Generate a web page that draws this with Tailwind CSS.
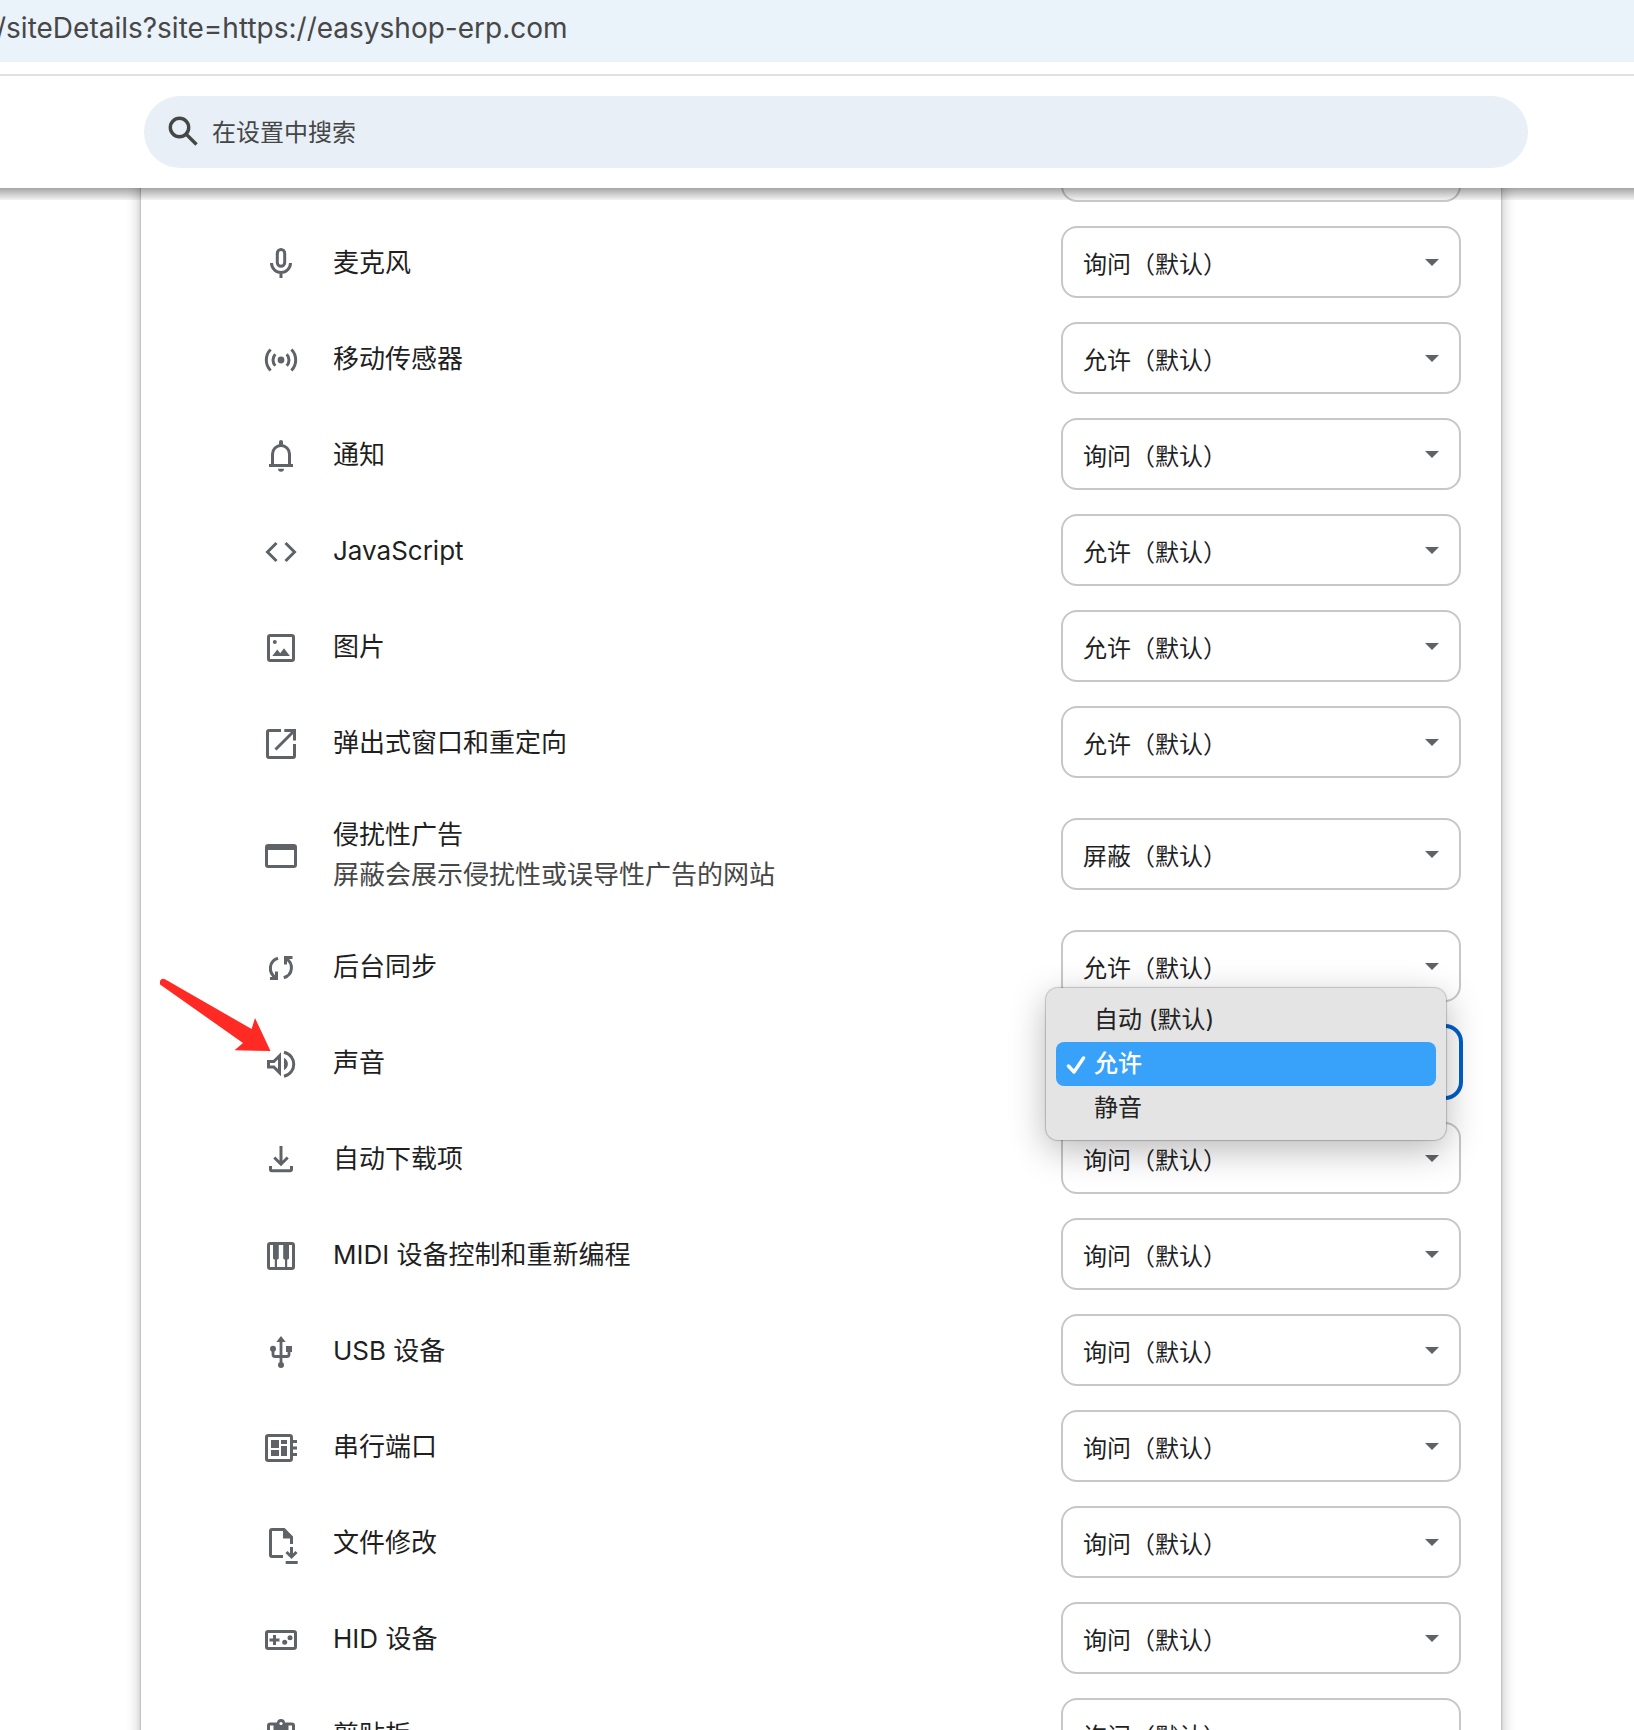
<!DOCTYPE html>
<html lang="zh-CN">
<head>
<meta charset="utf-8">
<meta name="viewport" content="width=device-width, initial-scale=1">
<title>设置</title>
<script src="https://cdn.jsdelivr.net/npm/@tailwindcss/browser@4"></script>
</head>
<body class="flex h-screen flex-col overflow-hidden bg-white font-[Inter,'Noto_Sans_CJK_SC',sans-serif] text-[26px] leading-10 text-[#1f1f1f]">

<!-- Address bar -->
<div class="flex h-[62px] shrink-0 items-center overflow-hidden bg-[#eaf2fa] pb-1.5 text-[28px] text-[#474747]"><span class="-ml-1">/siteDetails?site=https://easyshop-erp.com</span></div>

<!-- Settings toolbar -->
<header class="relative z-10 mt-3 shrink-0 border-t-2 border-[#e1e1e1] bg-white pt-5 pr-[106px] pb-5 pl-36">
  <label class="flex h-18 items-center gap-2 rounded-full bg-[#e9eff7] px-5 text-[#444746]">
    <svg class="size-10 shrink-0" viewBox="0 0 40 40" fill="none" stroke="currentColor" stroke-width="3.4"><circle cx="15.500" cy="15.500" r="9.2"/><path d="M22 22l10.500 10.500"/></svg>
    <input type="search" aria-label="在设置中搜索" placeholder="在设置中搜索" class="h-full min-w-0 flex-1 bg-transparent text-[24px] outline-none placeholder:text-[#444746]">
  </label>
  <div class="pointer-events-none absolute inset-x-0 top-full h-3 bg-linear-to-b from-black/35 to-black/5"></div>
</header>

<main class="min-h-0 flex-1 pl-2">
  <div class="mx-auto -mt-[70px] w-full max-w-[1360px] bg-white shadow-[0_0_2px_rgba(0,0,0,0.35),0_2px_14px_rgba(0,0,0,0.3)]">

    <div class="flex h-24 items-center justify-end pr-10">
      <select aria-label="权限" class="h-18 w-100 appearance-none rounded-2xl border-2 border-[#c7c7c7] bg-white px-5 text-[24px]"><option>询问（默认）</option></select>
    </div>

    <div class="flex h-24 items-center gap-8 pr-10 pl-30">
      <svg class="size-10 shrink-0 text-[#5f6368]" viewBox="0 0 40 40" fill="none" stroke="currentColor" stroke-width="3"><rect x="16.300" y="7.500" width="7.400" height="16.700" rx="3.700"/><path d="M10.500 21a9.500 9.500 0 0 0 19 0M20 30v6"/></svg>
      <label for="mic" class="flex-1 pt-0.5">麦克风</label>
      <div class="grid items-center">
        <select id="mic" class="col-start-1 row-start-1 h-18 w-100 appearance-none rounded-2xl border-2 border-[#c7c7c7] bg-white px-5 pt-1.5 text-[24px]"><option>询问（默认）</option></select>
        <svg class="pointer-events-none col-start-1 row-start-1 mr-[22px] h-2 w-3.5 justify-self-end text-[#5f6368]" viewBox="0 0 14 8"><path d="M0 1h14l-7 7z" fill="currentColor"/></svg>
      </div>
    </div>

    <div class="flex h-24 items-center gap-8 pr-10 pl-30">
      <svg class="size-10 shrink-0 text-[#5f6368]" viewBox="0 0 40 40" fill="none" stroke="currentColor" stroke-width="3"><circle cx="20" cy="22" r="3.400" fill="currentColor" stroke="none"/><path d="M14.300 16.300a8.200 8.200 0 0 0 0 11.400M25.700 16.300a8.200 8.200 0 0 1 0 11.400M9.600 11.500a15 15 0 0 0 0 21M30.400 11.500a15 15 0 0 1 0 21"/></svg>
      <label for="motion" class="flex-1 pt-0.5">移动传感器</label>
      <div class="grid items-center">
        <select id="motion" class="col-start-1 row-start-1 h-18 w-100 appearance-none rounded-2xl border-2 border-[#c7c7c7] bg-white px-5 pt-1.5 text-[24px]"><option>允许（默认）</option></select>
        <svg class="pointer-events-none col-start-1 row-start-1 mr-[22px] h-2 w-3.5 justify-self-end text-[#5f6368]" viewBox="0 0 14 8"><path d="M0 1h14l-7 7z" fill="currentColor"/></svg>
      </div>
    </div>

    <div class="flex h-24 items-center gap-8 pr-10 pl-30">
      <svg class="size-10 shrink-0 text-[#5f6368]" viewBox="0 0 40 40" fill="none" stroke="currentColor" stroke-width="3"><path d="M11.500 31V20a8.500 8.500 0 0 1 17 0v11M8 31.500h24"/><path d="M20 8v2.500" stroke-width="4" stroke-linecap="round"/><path d="M17 34.700h6a3 3 0 0 1-6 0z" fill="currentColor" stroke="none"/></svg>
      <label for="notify" class="flex-1 pt-0.5">通知</label>
      <div class="grid items-center">
        <select id="notify" class="col-start-1 row-start-1 h-18 w-100 appearance-none rounded-2xl border-2 border-[#c7c7c7] bg-white px-5 pt-1.5 text-[24px]"><option>询问（默认）</option></select>
        <svg class="pointer-events-none col-start-1 row-start-1 mr-[22px] h-2 w-3.5 justify-self-end text-[#5f6368]" viewBox="0 0 14 8"><path d="M0 1h14l-7 7z" fill="currentColor"/></svg>
      </div>
    </div>

    <div class="flex h-24 items-center gap-8 pr-10 pl-30">
      <svg class="size-10 shrink-0 text-[#5f6368]" viewBox="0 0 40 40" fill="none" stroke="currentColor" stroke-width="3"><path d="M15.500 13L6.500 22l9 9M24.500 13l9 9-9 9"/></svg>
      <label for="js" class="flex-1 pt-0.5">JavaScript</label>
      <div class="grid items-center">
        <select id="js" class="col-start-1 row-start-1 h-18 w-100 appearance-none rounded-2xl border-2 border-[#c7c7c7] bg-white px-5 pt-1.5 text-[24px]"><option>允许（默认）</option></select>
        <svg class="pointer-events-none col-start-1 row-start-1 mr-[22px] h-2 w-3.5 justify-self-end text-[#5f6368]" viewBox="0 0 14 8"><path d="M0 1h14l-7 7z" fill="currentColor"/></svg>
      </div>
    </div>

    <div class="flex h-24 items-center gap-8 pr-10 pl-30">
      <svg class="size-10 shrink-0 text-[#5f6368]" viewBox="0 0 40 40" fill="none" stroke="currentColor" stroke-width="3"><rect x="7.500" y="9.500" width="25" height="25" rx="1.800"/><path d="M11.300 30l5-6.500 2.900 3.700 3.800-5 5.900 7.800z" fill="currentColor" stroke="none"/><circle cx="13.800" cy="16" r="2" fill="currentColor" stroke="none"/></svg>
      <label for="images" class="flex-1 pt-0.5">图片</label>
      <div class="grid items-center">
        <select id="images" class="col-start-1 row-start-1 h-18 w-100 appearance-none rounded-2xl border-2 border-[#c7c7c7] bg-white px-5 pt-1.5 text-[24px]"><option>允许（默认）</option></select>
        <svg class="pointer-events-none col-start-1 row-start-1 mr-[22px] h-2 w-3.5 justify-self-end text-[#5f6368]" viewBox="0 0 14 8"><path d="M0 1h14l-7 7z" fill="currentColor"/></svg>
      </div>
    </div>

    <div class="flex h-24 items-center gap-8 pr-10 pl-30">
      <svg class="size-10 shrink-0 text-[#5f6368]" viewBox="0 0 40 40" fill="none" stroke="currentColor" stroke-width="3"><path d="M20 8.500H8A1.500 1.500 0 0 0 6.500 10v24A1.500 1.500 0 0 0 8 35.500h24a1.500 1.500 0 0 0 1.500-1.500V22M23.300 8.500h10.200v10M33 9L14.500 27.500"/></svg>
      <label for="popups" class="flex-1 pt-0.5">弹出式窗口和重定向</label>
      <div class="grid items-center">
        <select id="popups" class="col-start-1 row-start-1 h-18 w-100 appearance-none rounded-2xl border-2 border-[#c7c7c7] bg-white px-5 pt-1.5 text-[24px]"><option>允许（默认）</option></select>
        <svg class="pointer-events-none col-start-1 row-start-1 mr-[22px] h-2 w-3.5 justify-self-end text-[#5f6368]" viewBox="0 0 14 8"><path d="M0 1h14l-7 7z" fill="currentColor"/></svg>
      </div>
    </div>

    <div class="flex h-32 items-center gap-8 pr-10 pl-30">
      <svg class="size-10 shrink-0 text-[#5f6368]" viewBox="0 0 40 40" fill="none" stroke="currentColor" stroke-width="3"><rect x="5.500" y="11.500" width="29" height="21" rx="1.800"/><path d="M5 14h30" stroke-width="4"/></svg>
      <div class="flex-1 pt-0.5">
        <label for="ads" class="block">侵扰性广告</label>
        <p class="text-[#474747]">屏蔽会展示侵扰性或误导性广告的网站</p>
      </div>
      <div class="grid items-center">
        <select id="ads" class="col-start-1 row-start-1 h-18 w-100 appearance-none rounded-2xl border-2 border-[#c7c7c7] bg-white px-5 pt-1.5 text-[24px]"><option>屏蔽（默认）</option></select>
        <svg class="pointer-events-none col-start-1 row-start-1 mr-[22px] h-2 w-3.5 justify-self-end text-[#5f6368]" viewBox="0 0 14 8"><path d="M0 1h14l-7 7z" fill="currentColor"/></svg>
      </div>
    </div>

    <div class="flex h-24 items-center gap-8 pr-10 pl-30">
      <svg class="size-10 shrink-0 text-[#5f6368]" viewBox="0 0 40 40" fill="none" stroke="currentColor" stroke-width="3"><path d="M17 12.300C7.800 15 6.800 26.500 14.800 31.800M9 32.500h6.500V25.500M22.800 31.700C32 29 33 17.500 25 12.200M31.500 11.500H24.500V18.500"/></svg>
      <label for="sync" class="flex-1 pt-0.5">后台同步</label>
      <div class="grid items-center">
        <select id="sync" class="col-start-1 row-start-1 h-18 w-100 appearance-none rounded-2xl border-2 border-[#c7c7c7] bg-white px-5 pt-1.5 text-[24px]"><option>允许（默认）</option></select>
        <svg class="pointer-events-none col-start-1 row-start-1 mr-[22px] h-2 w-3.5 justify-self-end text-[#5f6368]" viewBox="0 0 14 8"><path d="M0 1h14l-7 7z" fill="currentColor"/></svg>
      </div>
    </div>

    <!-- Sound: drop-down open, red arrow pointing at the icon -->
    <div class="relative flex h-24 items-center gap-8 pr-10 pl-30">
      <svg class="size-10 shrink-0 text-[#5f6368]" viewBox="0 0 40 40" fill="none" stroke="currentColor" stroke-width="3"><path d="M7.500 19.500h5.300l5.700-5.700v16.800l-5.700-5.700H7.500z"/><path d="M23 15.700c5.200 2.500 5.200 10 0 12.500z" fill="currentColor" stroke="none"/><path d="M23 10.200c13 3 13 21 0 24"/></svg>
      <label for="sound" class="flex-1 pt-0.5">声音</label>
      <div class="relative">
        <select id="sound" class="block h-18 w-100 appearance-none rounded-2xl border-2 border-[#005fc8] bg-white px-5 pt-1.5 text-[24px] ring-2 ring-[#005fc8]"><option>允许</option></select>
        <div role="listbox" aria-label="声音" class="absolute -top-[38px] -left-[15px] z-10 flex w-100 flex-col rounded-xl bg-[#e4e4e4] p-2.5 text-[24px] text-[#222] shadow-[0_0_1px_1px_rgba(0,0,0,0.2),0_10px_36px_rgba(0,0,0,0.28)]">
          <button type="button" role="option" aria-selected="false" class="h-11 rounded-lg pl-[38px] text-left">自动 (默认)</button>
          <button type="button" role="option" aria-selected="true" class="flex h-11 items-center gap-2 rounded-lg bg-[#38a2fb] pl-2.5 text-left font-medium text-white"><svg class="size-5" viewBox="0 0 20 20" fill="none" stroke="currentColor" stroke-width="3.400" stroke-linecap="round" stroke-linejoin="round"><path d="M2.500 12L8 18 17.500 4"/></svg>允许</button>
          <button type="button" role="option" aria-selected="false" class="h-11 rounded-lg pl-[38px] text-left">静音</button>
        </div>
      </div>
      <svg class="pointer-events-none absolute -top-9 left-[19px] h-[76px] w-28" viewBox="0 0 112 76"><path d="M5 1.300L91.600 51 95 40l15.500 33-36-.7L83 65 1.500 7.500A3.500 3.500 0 0 1 5 1.300z" fill="#ff2a23"/></svg>
    </div>

    <div class="flex h-24 items-center gap-8 pr-10 pl-30">
      <svg class="size-10 shrink-0 text-[#5f6368]" viewBox="0 0 40 40" fill="none" stroke="currentColor" stroke-width="3"><path d="M20 8v18M13.300 19.500L20 26.200l6.700-6.700M9.500 28v3.500a1.300 1.300 0 0 0 1.300 1.300h18.400a1.300 1.300 0 0 0 1.300-1.300V28"/></svg>
      <label for="downloads" class="flex-1 pt-0.5">自动下载项</label>
      <div class="grid items-center">
        <select id="downloads" class="col-start-1 row-start-1 h-18 w-100 appearance-none rounded-2xl border-2 border-[#c7c7c7] bg-white px-5 pt-1.5 text-[24px]"><option>询问（默认）</option></select>
        <svg class="pointer-events-none col-start-1 row-start-1 mr-[22px] h-2 w-3.5 justify-self-end text-[#5f6368]" viewBox="0 0 14 8"><path d="M0 1h14l-7 7z" fill="currentColor"/></svg>
      </div>
    </div>

    <div class="flex h-24 items-center gap-8 pr-10 pl-30">
      <svg class="size-10 shrink-0 text-[#5f6368]" viewBox="0 0 40 40" fill="none" stroke="currentColor" stroke-width="3"><rect x="7.500" y="9.500" width="25" height="25" rx="1.800"/><path d="M12 10v14.500l1 1h3.800l1-1V10zM22.200 10v14.500l1 1H27l1-1V10z" fill="currentColor" stroke="none"/><path d="M14.900 25v9M25.100 25v9" stroke-width="2.200"/></svg>
      <label for="midi" class="flex-1 pt-0.5">MIDI 设备控制和重新编程</label>
      <div class="grid items-center">
        <select id="midi" class="col-start-1 row-start-1 h-18 w-100 appearance-none rounded-2xl border-2 border-[#c7c7c7] bg-white px-5 pt-1.5 text-[24px]"><option>询问（默认）</option></select>
        <svg class="pointer-events-none col-start-1 row-start-1 mr-[22px] h-2 w-3.5 justify-self-end text-[#5f6368]" viewBox="0 0 14 8"><path d="M0 1h14l-7 7z" fill="currentColor"/></svg>
      </div>
    </div>

    <div class="flex h-24 items-center gap-8 pr-10 pl-30">
      <svg class="size-10 shrink-0 text-[#5f6368]" viewBox="0 0 40 40" fill="none" stroke="currentColor" stroke-width="2.800"><path d="M20 10v24M12 20v4.500a2 2 0 0 0 2 2h12a2 2 0 0 0 2-2V20"/><path d="M20 6l4.700 6h-9.400zM25 16h6v6h-6z" fill="currentColor" stroke="none"/><circle cx="12" cy="18.800" r="3" fill="currentColor" stroke="none"/><circle cx="20" cy="35" r="3" fill="currentColor" stroke="none"/></svg>
      <label for="usb" class="flex-1 pt-0.5">USB 设备</label>
      <div class="grid items-center">
        <select id="usb" class="col-start-1 row-start-1 h-18 w-100 appearance-none rounded-2xl border-2 border-[#c7c7c7] bg-white px-5 pt-1.5 text-[24px]"><option>询问（默认）</option></select>
        <svg class="pointer-events-none col-start-1 row-start-1 mr-[22px] h-2 w-3.5 justify-self-end text-[#5f6368]" viewBox="0 0 14 8"><path d="M0 1h14l-7 7z" fill="currentColor"/></svg>
      </div>
    </div>

    <div class="flex h-24 items-center gap-8 pr-10 pl-30">
      <svg class="size-10 shrink-0 text-[#5f6368]" viewBox="0 0 40 40" fill="none" stroke="currentColor" stroke-width="3"><rect x="5.500" y="9.500" width="25" height="25" rx="1.800"/><path d="M31 15.500h5M31 22h5M31 28.500h5"/><path d="M10 14h8v8h-8zM20 14h6v4h-6zM10 24h8v6h-8zM20 20h6v10h-6z" fill="currentColor" stroke="none"/></svg>
      <label for="serial" class="flex-1 pt-0.5">串行端口</label>
      <div class="grid items-center">
        <select id="serial" class="col-start-1 row-start-1 h-18 w-100 appearance-none rounded-2xl border-2 border-[#c7c7c7] bg-white px-5 pt-1.5 text-[24px]"><option>询问（默认）</option></select>
        <svg class="pointer-events-none col-start-1 row-start-1 mr-[22px] h-2 w-3.5 justify-self-end text-[#5f6368]" viewBox="0 0 14 8"><path d="M0 1h14l-7 7z" fill="currentColor"/></svg>
      </div>
    </div>

    <div class="flex h-24 items-center gap-8 pr-10 pl-30">
      <svg class="size-10 shrink-0 overflow-visible text-[#5f6368]" viewBox="0 0 40 40" fill="none" stroke="currentColor" stroke-width="3"><path d="M22 34.500H11A1.500 1.500 0 0 1 9.500 33V9A1.500 1.500 0 0 1 11 7.500h12l7.500 7.500v7M30.500 25v10M25.500 30l5 5 5-5M24.700 40.500h12"/><path d="M22 7v9.500h9.500z" fill="currentColor" stroke="none"/></svg>
      <label for="files" class="flex-1 pt-0.5">文件修改</label>
      <div class="grid items-center">
        <select id="files" class="col-start-1 row-start-1 h-18 w-100 appearance-none rounded-2xl border-2 border-[#c7c7c7] bg-white px-5 pt-1.5 text-[24px]"><option>询问（默认）</option></select>
        <svg class="pointer-events-none col-start-1 row-start-1 mr-[22px] h-2 w-3.5 justify-self-end text-[#5f6368]" viewBox="0 0 14 8"><path d="M0 1h14l-7 7z" fill="currentColor"/></svg>
      </div>
    </div>

    <div class="flex h-24 items-center gap-8 pr-10 pl-30">
      <svg class="size-10 shrink-0 text-[#5f6368]" viewBox="0 0 40 40" fill="none" stroke="currentColor" stroke-width="3"><rect x="5.500" y="13.500" width="29" height="17" rx="1.800"/><path d="M8.500 22h10M13.500 17v10"/><circle cx="23.700" cy="24.300" r="2.500" fill="currentColor" stroke="none"/><circle cx="29" cy="19.800" r="2.500" fill="currentColor" stroke="none"/></svg>
      <label for="hid" class="flex-1 pt-0.5">HID 设备</label>
      <div class="grid items-center">
        <select id="hid" class="col-start-1 row-start-1 h-18 w-100 appearance-none rounded-2xl border-2 border-[#c7c7c7] bg-white px-5 pt-1.5 text-[24px]"><option>询问（默认）</option></select>
        <svg class="pointer-events-none col-start-1 row-start-1 mr-[22px] h-2 w-3.5 justify-self-end text-[#5f6368]" viewBox="0 0 14 8"><path d="M0 1h14l-7 7z" fill="currentColor"/></svg>
      </div>
    </div>

    <div class="flex h-24 items-center gap-8 pr-10 pl-30">
      <svg class="size-10 shrink-0 text-[#5f6368]" viewBox="0 0 40 40" fill="none" stroke="currentColor" stroke-width="3"><rect x="7.500" y="10" width="25" height="25" rx="1.800"/><path d="M12.500 9h15v9h-15z" fill="currentColor" stroke="none"/><circle cx="20" cy="9" r="4" fill="currentColor" stroke="none"/><circle cx="20" cy="9.500" r="1.600" fill="#fff" stroke="none"/></svg>
      <label for="clipboard" class="flex-1 pt-0.5">剪贴板</label>
      <div class="grid items-center">
        <select id="clipboard" class="col-start-1 row-start-1 h-18 w-100 appearance-none rounded-2xl border-2 border-[#c7c7c7] bg-white px-5 pt-1.5 text-[24px]"><option>询问（默认）</option></select>
        <svg class="pointer-events-none col-start-1 row-start-1 mr-[22px] h-2 w-3.5 justify-self-end text-[#5f6368]" viewBox="0 0 14 8"><path d="M0 1h14l-7 7z" fill="currentColor"/></svg>
      </div>
    </div>

  </div>
</main>
</body>
</html>
